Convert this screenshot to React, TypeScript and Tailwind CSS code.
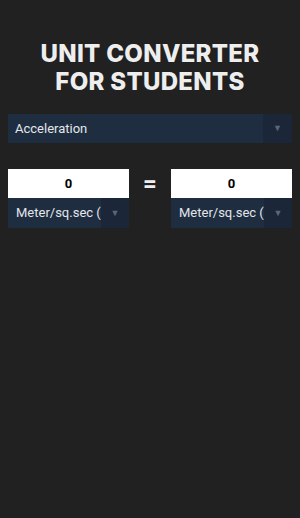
import React from "react";

function Caret() {
  return <span className="text-[9px] leading-none text-[#5b6677]">▼</span>;
}

function UnitBox() {
  return (
    <div className="w-[121px] flex flex-col">
      <div className="h-[29px] bg-white flex items-center justify-center text-[13px] font-bold text-black">0</div>
      <div className="h-[30px] bg-[#1f2d41] flex items-center">
        <div className="flex-1 overflow-hidden whitespace-nowrap pl-[8px] text-[13px] text-[#e3e6ea]">Meter/sq.sec (m/s²)</div>
        <div className="w-[28px] h-full bg-[#1b2738] flex items-center justify-center">
          <Caret />
        </div>
      </div>
    </div>
  );
}

export default function App() {
  return (
    <div className="w-[300px] h-[518px] bg-[#212121] pt-[40px] px-[8px]" style={{ fontFamily: "Roboto, 'Liberation Sans', sans-serif" }}>
      <h1 className="text-center text-[24px] leading-[28px] font-extrabold text-[#eeeeee] tracking-[0.3px]" style={{ fontFamily: "Inter, 'Open Sans', sans-serif" }}>
        UNIT CONVERTER
        <br />
        FOR STUDENTS
      </h1>
      <div className="mt-[18px] h-[29px] bg-[#1f2d41] flex items-center">
        <div className="flex-1 pl-[7px] text-[13px] text-[#e3e6ea]">Acceleration</div>
        <div className="w-[29px] h-full bg-[#1b2738] flex items-center justify-center">
          <Caret />
        </div>
      </div>
      <div className="mt-[26px] flex items-start justify-between">
        <UnitBox />
        <div className="h-[29px] flex items-center text-[24px] font-bold text-[#eeeeee] leading-none">=</div>
        <UnitBox />
      </div>
    </div>
  );
}
